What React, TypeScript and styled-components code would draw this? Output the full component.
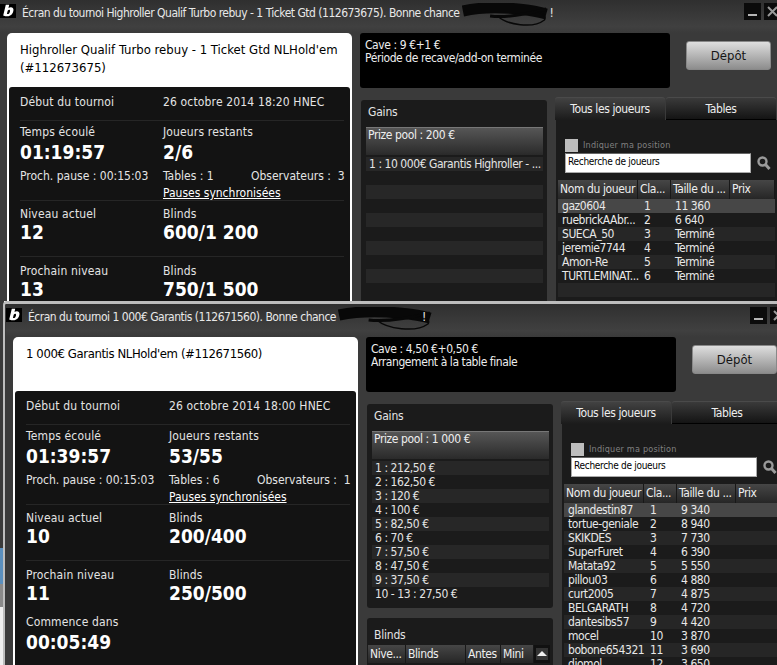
import styled, { createGlobalStyle } from "styled-components";

const GlobalStyle = createGlobalStyle`
  html, body {
    margin: 0;
    padding: 0;
    background: #fff;
  }
  * {
    box-sizing: border-box;
  }
`;

const FONT = `"DejaVu Sans Condensed", "DejaVu Sans", sans-serif`;

type Player = { name: string; rank: number; stack: string };

type Tournament = {
  windowTitle: string;
  scribble: number;
  bangOffset: number;
  name: string;
  nameSpacing: number;
  buyIn: string;
  status: string;
  start: string;
  elapsed: string;
  players: string;
  tables: number;
  observers: number;
  level: number;
  blinds: string;
  nextLevel: number;
  nextBlinds: string;
  startsIn?: string;
  showBlinds: boolean;
  prizePool: string;
  prizes: string[];
  ranking: Player[];
};

const first: Tournament = {
  windowTitle:
    "Écran du tournoi Highroller Qualif Turbo rebuy - 1 Ticket Gtd (112673675). Bonne chance",
  scribble: 88,
  bangOffset: 0,
  name: "Highroller Qualif Turbo rebuy - 1 Ticket Gtd NLHold'em (#112673675)",
  nameSpacing: 0,
  buyIn: "Cave : 9 €+1 €",
  status: "Période de recave/add-on terminée",
  start: "26 octobre 2014 18:20 HNEC",
  elapsed: "01:19:57",
  players: "2/6",
  tables: 1,
  observers: 3,
  level: 12,
  blinds: "600/1 200",
  nextLevel: 13,
  nextBlinds: "750/1 500",
  showBlinds: false,
  prizePool: "Prize pool : 200 €",
  prizes: ["1 : 10 000€ Garantis Highroller - ..."],
  ranking: [
    { name: "gaz0604", rank: 1, stack: "11 360" },
    { name: "ruebrickAAbr...", rank: 2, stack: "6 640" },
    { name: "SUECA_50", rank: 3, stack: "Terminé" },
    { name: "jeremie7744", rank: 4, stack: "Terminé" },
    { name: "Amon-Re", rank: 5, stack: "Terminé" },
    { name: "TURTLEMINAT...", rank: 6, stack: "Terminé" },
  ],
};

const second: Tournament = {
  windowTitle: "Écran du tournoi 1 000€ Garantis (112671560). Bonne chance",
  scribble: 96,
  bangOffset: -12,
  name: "1 000€ Garantis NLHold'em (#112671560)",
  nameSpacing: -0.4,
  buyIn: "Cave : 4,50 €+0,50 €",
  status: "Arrangement à la table finale",
  start: "26 octobre 2014 18:00 HNEC",
  elapsed: "01:39:57",
  players: "53/55",
  tables: 6,
  observers: 1,
  level: 10,
  blinds: "200/400",
  nextLevel: 11,
  nextBlinds: "250/500",
  startsIn: "00:05:49",
  showBlinds: true,
  prizePool: "Prize pool : 1 000 €",
  prizes: [
    "1 : 212,50 €",
    "2 : 162,50 €",
    "3 : 120 €",
    "4 : 100 €",
    "5 : 82,50 €",
    "6 : 70 €",
    "7 : 57,50 €",
    "8 : 47,50 €",
    "9 : 37,50 €",
    "10 - 13 : 27,50 €",
  ],
  ranking: [
    { name: "glandestin87", rank: 1, stack: "9 340" },
    { name: "tortue-geniale", rank: 2, stack: "8 940" },
    { name: "SKIKDES", rank: 3, stack: "7 730" },
    { name: "SuperFuret", rank: 4, stack: "6 390" },
    { name: "Matata92", rank: 5, stack: "5 550" },
    { name: "pillou03", rank: 6, stack: "4 880" },
    { name: "curt2005", rank: 7, stack: "4 875" },
    { name: "BELGARATH", rank: 8, stack: "4 720" },
    { name: "dantesibs57", rank: 9, stack: "4 420" },
    { name: "mocel", rank: 10, stack: "3 870" },
    { name: "bobone654321", rank: 11, stack: "3 690" },
    { name: "diomol", rank: 12, stack: "3 650" },
  ],
};

const Desktop = styled.div`
  position: relative;
  width: 777px;
  height: 665px;
  overflow: hidden;
  background: #fff;
  font-family: ${FONT};
  font-size: 12px;
  color: #e4e4e4;
`;

const BehindStrip = styled.div`
  position: absolute;
  left: 0;
  top: 300px;
  width: 4px;
  height: 365px;
  display: flex;
  flex-direction: column;
`;

const StripPart = styled.div<{ $h: number; $c: string }>`
  height: ${(p) => p.$h}px;
  background: ${(p) => p.$c};
`;

const Window = styled.div<{ $left: number; $top: number; $h: number; $edge: string }>`
  position: absolute;
  left: ${(p) => p.$left}px;
  top: ${(p) => p.$top}px;
  width: 800px;
  height: ${(p) => p.$h}px;
  overflow: hidden;
  padding-left: 1px;
  background: #3a3a3a;
  border-left: 2px solid ${(p) => p.$edge};
  border-top: 3px solid ${(p) => p.$edge};
  border-top-left-radius: 4px;
`;

const TitleBar = styled.div`
  position: relative;
  height: 33px;
  padding: 3px 16px 0 0;
  display: flex;
  align-items: flex-start;
  background: linear-gradient(#2f2f2f, #404040 80%, #3a3a3a);
`;

const Logo = styled.svg`
  flex: none;
  width: 16px;
  height: 14px;
  margin: 1px 6px 0 0;
  background: #000;
`;

const WindowTitle = styled.div`
  font-size: 12px;
  letter-spacing: -0.5px;
  line-height: 20px;
  color: #e8e8e8;
  white-space: nowrap;
`;

const Scribble = styled.svg`
  flex: none;
  height: 24px;
  margin-left: 2px;
`;

const Bang = styled.span<{ $offset: number }>`
  margin-left: ${(p) => p.$offset}px;
  line-height: 20px;
  font-size: 12px;
  color: #e8e8e8;
`;

const WindowButtons = styled.div`
  margin-left: auto;
  display: flex;
  gap: 3px;
`;

const WindowButton = styled.div`
  width: 17px;
  height: 17px;
  background: #0b0b0b;
  color: #aaa;
  display: flex;
  align-items: center;
  justify-content: center;
  svg {
    display: block;
  }
`;

const Body = styled.div`
  display: flex;
  padding-left: 7px;
  gap: 8px;
`;

const LeftColumn = styled.div`
  flex: none;
  width: 345px;
  background: #fff;
  border-radius: 5px 5px 0 0;
  padding: 0 2px;
`;

const CardTitle = styled.div<{ $spacing: number }>`
  height: 54px;
  padding: 8px 8px 0 11px;
  color: #000;
  font-size: 13px;
  font-weight: 500;
  line-height: 18px;
  letter-spacing: ${(p) => p.$spacing}px;
`;

const InfoPanel = styled.div`
  background: #131313;
  border-radius: 3px 3px 0 0;
  padding: 0 6px 0 11px;
  height: 600px;
`;

const InfoSection = styled.div<{ $h: number; $pad: number }>`
  display: grid;
  grid-template-columns: 143px 1fr;
  align-content: start;
  height: ${(p) => p.$h}px;
  padding-top: ${(p) => p.$pad}px;
  border-bottom: 1px solid #262626;
`;

const LastSection = styled(InfoSection)`
  border-bottom: 0;
`;

const Label = styled.div`
  font-size: 12px;
  letter-spacing: 0.15px;
  line-height: 14px;
  color: #e4e4e4;
  white-space: nowrap;
`;

const BigValue = styled.div`
  font-size: 19px;
  font-weight: 700;
  line-height: 22px;
  color: #fff;
  white-space: nowrap;
`;

const ClockValue = styled(BigValue)`
  line-height: 26px;
`;

const SmallRow = styled.div`
  display: flex;
  height: 21px;
  align-items: center;
  white-space: nowrap;
`;

const TablesCell = styled.span`
  width: 88px;
`;

const SyncLink = styled.a`
  grid-column: 2;
  font-size: 12px;
  line-height: 14px;
  color: #fff;
  text-decoration: underline;
`;

const RightColumn = styled.div`
  flex: none;
  width: 440px;
`;

const TopRow = styled.div`
  display: flex;
  height: 64px;
`;

const MessageBox = styled.div`
  width: 310px;
  height: 55px;
  padding: 6px 5px;
  border-radius: 3px;
  background: #000;
  font-size: 12px;
  letter-spacing: -0.42px;
  line-height: 13px;
  color: #eee;
`;

const DepositButton = styled.button`
  width: 85px;
  height: 29px;
  margin: 8px 0 0 16px;
  border: 1px solid #888;
  border-radius: 3px;
  background: linear-gradient(#dedede, #8d8d8d);
  color: #151515;
  font-family: ${FONT};
  font-size: 13px;
  padding: 0 0 1px;
`;

const Columns = styled.div`
  display: flex;
`;

const SideColumn = styled.div`
  flex: none;
  width: 186px;
  margin: 3px 0 0 1px;
  display: flex;
  flex-direction: column;
  gap: 10px;
`;

const Panel = styled.section<{ $h: number; $pad: number }>`
  height: ${(p) => p.$h}px;
  padding: ${(p) => p.$pad}px 4px 0 5px;
  border-radius: 3px;
  background: #1b1b1b;
`;

const PanelTitle = styled.h3`
  margin: 0;
  padding-left: 2px;
  height: 23px;
  font-size: 12px;
  font-weight: 400;
  line-height: 16px;
  letter-spacing: -0.2px;
  color: #e4e4e4;
`;

const PrizePool = styled.div`
  height: 28px;
  margin: 0 0 2px;
  padding: 0 2px;
  line-height: 15px;
  letter-spacing: -0.4px;
  background: linear-gradient(#565656, #2a2a2a);
  border-top: 1px solid #777;
  color: #eee;
`;

const BandRow = styled.div`
  height: 14px;
  padding-left: 3px;
  font-size: 12px;
  letter-spacing: -0.45px;
  line-height: 14px;
  white-space: nowrap;
  &:nth-child(odd) {
    background: #272727;
  }
`;

const BlindsHeader = styled.div`
  display: grid;
  grid-template-columns: 38px 60px 35px 33px 16px;
  height: 18px;
  margin: -5px -1px 0 -4px;
`;

const HeaderCell = styled.div`
  padding-left: 2px;
  line-height: 18px;
  letter-spacing: -0.4px;
  white-space: nowrap;
  border-right: 1px solid #181818;
  background: linear-gradient(#464646, #262626);
  color: #eee;
`;

const ScrollUp = styled.div`
  background: #111;
  display: flex;
  align-items: center;
  justify-content: center;
  svg {
    display: block;
  }
`;

const PlayersColumn = styled.div`
  flex: none;
  width: 225px;
  margin-left: 8px;
`;

const Tabs = styled.div`
  display: flex;
  height: 23px;
  gap: 1px;
`;

const Tab = styled.div<{ $active?: boolean }>`
  width: 110px;
  text-align: center;
  line-height: 23px;
  letter-spacing: -0.4px;
  border-radius: 3px 3px 0 0;
  color: #eee;
  border-top: 1px solid #4a4a4a;
  background: ${(p) =>
    p.$active
      ? "linear-gradient(#424242, #1b1b1b)"
      : "linear-gradient(#3a3a3a, #141414)"};
  border-bottom: ${(p) => (p.$active ? "0" : "1px solid #000")};
`;

const TabBody = styled.div`
  height: 600px;
  margin-left: 1px;
  padding: 18px 0 0 2px;
  background: #1b1b1b;
`;

const PositionRow = styled.div`
  display: flex;
  align-items: flex-end;
  gap: 5px;
  height: 14px;
  margin: 0 0 1px 7px;
`;

const CheckBox = styled.div`
  width: 13px;
  height: 13px;
  background: #bdbdbd;
`;

const PositionLabel = styled.span`
  font-size: 9px;
  letter-spacing: 0.2px;
  line-height: 13px;
  color: #808080;
`;

const SearchRow = styled.div`
  display: flex;
  align-items: center;
  gap: 6px;
  height: 20px;
  margin: 1px 0 7px 7px;
`;

const SearchBox = styled.div`
  width: 186px;
  height: 20px;
  padding-left: 2px;
  border: 1px solid #aaa;
  border-top: 1px solid #666;
  background: #fff;
  color: #000;
  font-size: 10px;
  line-height: 16px;
  letter-spacing: -0.3px;
`;

const SearchIcon = styled.svg`
  width: 14px;
  height: 14px;
`;

const PlayerHeader = styled.div`
  display: grid;
  grid-template-columns: 80px 33px 59px 45px;
  height: 19px;
`;

const PlayerRow = styled.div`
  display: grid;
  grid-template-columns: 82px 31px 1fr;
  width: 217px;
  height: 14px;
  padding-left: 4px;
  line-height: 15px;
  letter-spacing: -0.45px;
  white-space: nowrap;
  color: #e8e8e8;
  &:nth-child(odd) {
    background: #262626;
  }
  &:first-child {
    background: #474747;
  }
`;

const EmptyRow = styled(PlayerRow)``;

function TournamentWindow({
  data,
  left,
  top,
  height,
  edge,
}: {
  data: Tournament;
  left: number;
  top: number;
  height: number;
  edge: string;
}) {
  const bands = Array.from({ length: 10 }, (_, i) => data.prizes[i] ?? "");
  return (
    <Window $left={left} $top={top} $h={height} $edge={edge}>
      <TitleBar>
        <Logo viewBox="0 0 16 14">
          <path
            fill="#fff"
            d="M5.800.8h3.400L8.500 4c.8-.5 1.500-.7 2.300-.7 2 0 3 1.300 2.600 3.500-.5 3-2.700 5.500-6 5.500-1.200 0-2.700-.3-4.200-.9L5.800.8zm1.900 5.900-.8 3.300c.2.100.5.100.7.100 1.200 0 2.100-1.200 2.400-2.700.2-1-.1-1.600-.8-1.600-.6 0-1.100.4-1.500.9z"
          />
        </Logo>
        <WindowTitle>{data.windowTitle}</WindowTitle>
        <Scribble viewBox="0 0 94 24" width={data.scribble} preserveAspectRatio="none">
          <g fill="none" stroke="#080808">
            <path d="M1 8C20 4 40 4 60 6c10 1 20 2 30 5" strokeWidth="11" />
            <path d="M30 13c15 2 40-2 60-7" strokeWidth="3" />
            <path d="M38 13c10 9 38 13 50 4 3-4-3-8-12-9" strokeWidth="1.500" />
          </g>
        </Scribble>
        <Bang $offset={data.bangOffset}>!</Bang>
        <WindowButtons>
          <WindowButton>
            <svg width="11" height="11" viewBox="0 0 11 11">
              <rect x="1" y="8" width="9" height="2" fill="#b5b5b5" />
            </svg>
          </WindowButton>
          <WindowButton>
            <svg width="13" height="13" viewBox="0 0 13 13">
              <path d="M2 2l9 9M11 2l-9 9" stroke="#999" strokeWidth="2" />
            </svg>
          </WindowButton>
        </WindowButtons>
      </TitleBar>
      <Body>
        <LeftColumn>
          <CardTitle $spacing={data.nameSpacing}>{data.name}</CardTitle>
          <InfoPanel>
            <InfoSection $h={34} $pad={8}>
              <Label>Début du tournoi</Label>
              <Label>{data.start}</Label>
            </InfoSection>
            <InfoSection $h={80} $pad={4}>
              <Label>Temps écoulé</Label>
              <Label>Joueurs restants</Label>
              <ClockValue>{data.elapsed}</ClockValue>
              <ClockValue>{data.players}</ClockValue>
              <SmallRow>Proch. pause : 00:15:03</SmallRow>
              <SmallRow>
                <TablesCell>Tables : {data.tables}</TablesCell>
                Observateurs :&nbsp; {data.observers}
              </SmallRow>
              <SyncLink>Pauses synchronisées</SyncLink>
            </InfoSection>
            <InfoSection $h={56} $pad={6}>
              <Label>Niveau actuel</Label>
              <Label>Blinds</Label>
              <BigValue>{data.level}</BigValue>
              <BigValue>{data.blinds}</BigValue>
            </InfoSection>
            <LastSection $h={47} $pad={7}>
              <Label>Prochain niveau</Label>
              <Label>Blinds</Label>
              <BigValue>{data.nextLevel}</BigValue>
              <BigValue>{data.nextBlinds}</BigValue>
            </LastSection>
            {data.startsIn && (
              <LastSection $h={50} $pad={7}>
                <Label>Commence dans</Label>
                <span />
                <ClockValue>{data.startsIn}</ClockValue>
              </LastSection>
            )}
          </InfoPanel>
        </LeftColumn>
        <RightColumn>
          <TopRow>
            <MessageBox>
              {data.buyIn}
              <br />
              {data.status}
            </MessageBox>
            <DepositButton>Dépôt</DepositButton>
          </TopRow>
          <Columns>
            <SideColumn>
              <Panel $h={204} $pad={4}>
                <PanelTitle>Gains</PanelTitle>
                <PrizePool>{data.prizePool}</PrizePool>
                <div>
                  {bands.map((prize, i) => (
                    <BandRow key={i}>{prize}</BandRow>
                  ))}
                </div>
              </Panel>
              {data.showBlinds && (
                <Panel $h={120} $pad={9}>
                  <PanelTitle>Blinds</PanelTitle>
                  <BlindsHeader>
                    <HeaderCell>Nive...</HeaderCell>
                    <HeaderCell>Blinds</HeaderCell>
                    <HeaderCell>Antes</HeaderCell>
                    <HeaderCell>Mini</HeaderCell>
                    <ScrollUp>
                      <svg width="12" height="12" viewBox="0 0 12 12">
                        <rect width="12" height="12" fill="#333" />
                        <path d="M6 3l5 5H1z" fill="#eee" />
                      </svg>
                    </ScrollUp>
                  </BlindsHeader>
                </Panel>
              )}
            </SideColumn>
            <PlayersColumn>
              <Tabs>
                <Tab $active>Tous les joueurs</Tab>
                <Tab>Tables</Tab>
              </Tabs>
              <TabBody>
                <PositionRow>
                  <CheckBox />
                  <PositionLabel>Indiquer ma position</PositionLabel>
                </PositionRow>
                <SearchRow>
                  <SearchBox>Recherche de joueurs</SearchBox>
                  <SearchIcon viewBox="0 0 14 14">
                    <circle cx="5.500" cy="5.500" r="4" fill="none" stroke="#9a9a9a" strokeWidth="2.400" />
                    <path d="M8.500 8.500l4 4.500" stroke="#9a9a9a" strokeWidth="3" />
                  </SearchIcon>
                </SearchRow>
                <PlayerHeader>
                  <HeaderCell>Nom du joueur</HeaderCell>
                  <HeaderCell>Cla...</HeaderCell>
                  <HeaderCell>Taille du ...</HeaderCell>
                  <HeaderCell>Prix</HeaderCell>
                </PlayerHeader>
                <div>
                  {data.ranking.map((player) => (
                    <PlayerRow key={player.rank}>
                      <span>{player.name}</span>
                      <span>{player.rank}</span>
                      <span>{player.stack}</span>
                    </PlayerRow>
                  ))}
                  <EmptyRow />
                </div>
              </TabBody>
            </PlayersColumn>
          </Columns>
        </RightColumn>
      </Body>
    </Window>
  );
}

export default function App() {
  return (
    <>
      <GlobalStyle />
      <Desktop>
        <TournamentWindow data={first} left={-3} top={-3} height={304} edge="#a8a8a8" />
        <BehindStrip>
          <StripPart $h={248} $c="#3a3a3a" />
          <StripPart $h={36} $c="#5b8fbd" />
          <StripPart $h={23} $c="#8a8a8a" />
          <StripPart $h={58} $c="#eeeeee" />
        </BehindStrip>
        <TournamentWindow data={second} left={3} top={301} height={400} edge="#bdbdbd" />
      </Desktop>
    </>
  );
}
